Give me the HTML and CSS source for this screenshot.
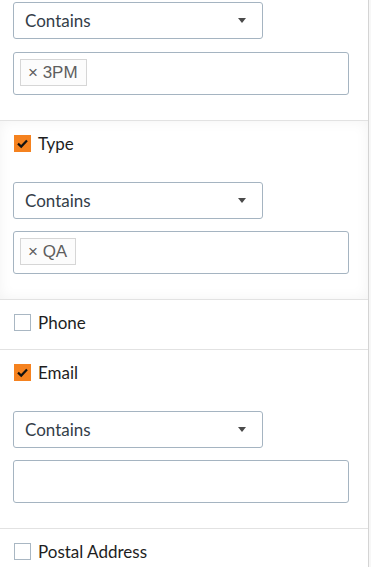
FILE: index.html
```html
<!DOCTYPE html>
<html lang="en">

<head>
    <meta charset="UTF-8">
    <meta name="viewport" content="width=device-width, initial-scale=1.0">
    <title>Filters</title>

    <link rel="stylesheet" href="styles.css">
</head>

<body>
    <div class="panel">
        <div class="section top">
            <div class="filter-body">
                <div class="select">
                    <span>Contains</span>
                    <span class="caret"></span>
                </div>
                <div class="tag-input">
                    <span class="tag">&times; 3PM</span>
                </div>
            </div>
        </div>

        <div class="section active">
            <label class="field">
                <span class="check checked">
                    <svg viewBox="0 0 17 17" width="17" height="17"><path d="M4 8.6 L7.2 11.6 L13 5.4" fill="none" stroke="#111" stroke-width="2.2"/></svg>
                </span>
                Type
            </label>
            <div class="filter-body">
                <div class="select">
                    <span>Contains</span>
                    <span class="caret"></span>
                </div>
                <div class="tag-input">
                    <span class="tag">&times; QA</span>
                </div>
            </div>
        </div>

        <div class="section">
            <label class="field">
                <span class="check"></span>
                Phone
            </label>
        </div>

        <div class="section">
            <label class="field">
                <span class="check checked">
                    <svg viewBox="0 0 17 17" width="17" height="17"><path d="M4 8.6 L7.2 11.6 L13 5.4" fill="none" stroke="#111" stroke-width="2.2"/></svg>
                </span>
                Email
            </label>
            <div class="filter-body">
                <div class="select">
                    <span>Contains</span>
                    <span class="caret"></span>
                </div>
                <div class="tag-input"></div>
            </div>
        </div>

        <div class="section">
            <label class="field">
                <span class="check"></span>
                Postal Address
            </label>
        </div>
    </div>
</body>

</html>
```

FILE: styles.css
```css
* {
    box-sizing: border-box;
    padding: 0;
    margin: 0;
}

body {
    background-color: #f7f7f7;
    font-family: Lato, "Open Sans", sans-serif;
    font-size: 17px;
    color: #1e1e1e;
}

.panel {
    width: 369px;
    min-height: 567px;
    background-color: white;
    border-right: 1px solid #d4d4d4;
}

.section {
    border-top: 1px solid #e2e2e2;
    padding: 0 13px;
}

.section.top {
    border-top: none;
    padding-top: 2px;
}

.section.active {
    box-shadow: inset 0 0 14px rgba(0, 0, 0, 0.05);
}

.field {
    display: flex;
    align-items: center;
    gap: 7px;
    height: 49px;
    padding-bottom: 4px;
    padding-left: 1px;
    line-height: 17px;
}

.check {
    width: 17px;
    height: 17px;
    border: 1px solid #a9b7c3;
    background-color: white;
    display: flex;
}

.check.checked {
    border: none;
    background-color: #f5821f;
}

.filter-body {
    display: flex;
    flex-direction: column;
    gap: 12px;
    padding-bottom: 25px;
}

.section.top .filter-body {
    gap: 13px;
}

.field + .filter-body {
    padding-top: 12px;
}

.select {
    width: 250px;
    height: 37px;
    border: 1px solid #a5b4c1;
    border-radius: 3px;
    padding: 0 16px 0 11px;
    display: flex;
    align-items: center;
    justify-content: space-between;
    color: #333d48;
}

.caret {
    width: 0;
    height: 0;
    border-left: 4.5px solid transparent;
    border-right: 4.5px solid transparent;
    border-top: 5px solid #4a4a4a;
}

.tag-input {
    width: 336px;
    height: 43px;
    border: 1px solid #a5b4c1;
    border-radius: 3px;
    padding: 6px 6px;
    display: flex;
    align-items: flex-start;
}

.tag {
    height: 27px;
    padding: 0 8px 0 7px;
    border: 1px solid #d6d6d6;
    background-color: #fcfcfc;
    font-family: "Liberation Sans", Arial, sans-serif;
    font-size: 17px;
    line-height: 25px;
    color: #5e5e5e;
}
```
